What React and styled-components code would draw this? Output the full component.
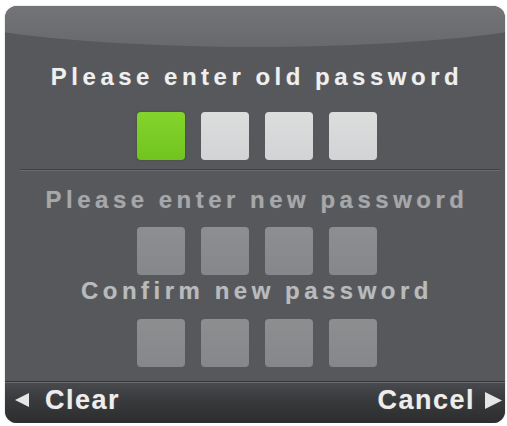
import React from "react";
import styled, { createGlobalStyle } from "styled-components";

const GlobalStyle = createGlobalStyle`
  html, body {
    margin: 0;
    padding: 0;
    background: #ffffff;
  }
  body {
    font-family: "Liberation Sans", Arial, sans-serif;
  }
`;

const Panel = styled.div`
  position: relative;
  margin: 6px 0 0 5px;
  width: 500px;
  height: 417px;
  border-radius: 12px;
  background: #56585b;
  overflow: hidden;
  display: flex;
  flex-direction: column;
  box-shadow: 0 0 2px rgba(0, 0, 0, 0.25);

  &::before {
    content: "";
    position: absolute;
    left: -100px;
    top: -57px;
    width: 700px;
    height: 98px;
    border-radius: 50%;
    background: linear-gradient(#737578 55%, #67696c);
  }
`;

const Body = styled.div`
  position: relative;
  flex: 1;
  display: flex;
  flex-direction: column;
  align-items: center;
  padding: 58px 0 0 4px;
`;

const Title = styled.div`
  font-size: 24px;
  line-height: 26px;
  font-weight: bold;
  letter-spacing: 4.5px;
  word-spacing: -1px;
  white-space: nowrap;
  color: ${(p) => p.$color};
  margin-top: ${(p) => p.$top}px;
  text-shadow: 0 0 1px rgba(255, 255, 255, 0.25);
`;

const Row = styled.div`
  display: flex;
  gap: 16px;
  margin-top: ${(p) => p.$top}px;
`;

const boxColors = {
  active: "linear-gradient(#83d52c, #71c41f)",
  empty: "linear-gradient(#dcdddd, #d2d3d4)",
  dim: "linear-gradient(#8d8e90, #86878a)",
};

const Box = styled.div`
  width: 48px;
  height: 48px;
  border-radius: 4px;
  background: ${(p) => boxColors[p.$state]};
  box-shadow: ${(p) =>
    p.$state === "active" ? "0 0 2px rgba(40, 70, 10, 0.6)" : "none"};
`;

const Divider = styled.div`
  align-self: stretch;
  margin: 9px 5px 0 11px;
  border-top: 1px solid #3e3f42;
  border-bottom: 1px solid #6a6c6f;
`;

const Footer = styled.div`
  position: relative;
  height: 42px;
  display: flex;
  align-items: center;
  justify-content: space-between;
  padding: 0 3px 5px 10px;
  box-sizing: border-box;
  border-top: 1px solid #343537;
  box-shadow: inset 0 1px 0 #6c6d70;
  background: linear-gradient(#4a4b4e, #3a3b3d 40%, #2c2d2f);
`;

const Action = styled.div`
  display: flex;
  align-items: center;
  gap: ${(p) => p.$gap}px;
  font-size: 27px;
  font-weight: bold;
  letter-spacing: 1.5px;
  color: #ededed;
  text-shadow: 0 0 1px rgba(255, 255, 255, 0.3);
`;

const Arrow = ({ dir, size }) => (
  <svg width={size} height={size} viewBox="0 0 10 10">
    {dir === "left" ? (
      <polygon points="10,0 10,10 0,5" fill="#e6e6e6" />
    ) : (
      <polygon points="0,0 0,10 10,5" fill="#e6e6e6" />
    )}
  </svg>
);

const PinRow = ({ states, top }) => (
  <Row $top={top}>
    {states.map((s, i) => (
      <Box key={i} $state={s} />
    ))}
  </Row>
);

export default function App() {
  return (
    <>
      <GlobalStyle />
      <Panel>
        <Body>
          <Title $color="#efefef" $top={0}>Please enter old password</Title>
          <PinRow top={22} states={["active", "empty", "empty", "empty"]} />
          <Divider />
          <Title $color="#a6a7a9" $top={16}>Please enter new password</Title>
          <PinRow top={14} states={["dim", "dim", "dim", "dim"]} />
          <Title $color="#b9babc" $top={3}>Confirm new password</Title>
          <PinRow top={15} states={["dim", "dim", "dim", "dim"]} />
        </Body>
        <Footer>
          <Action $gap={16}>
            <Arrow dir="left" size={14} />
            <span>Clear</span>
          </Action>
          <Action $gap={10}>
            <span>Cancel</span>
            <Arrow dir="right" size={17} />
          </Action>
        </Footer>
      </Panel>
    </>
  );
}
